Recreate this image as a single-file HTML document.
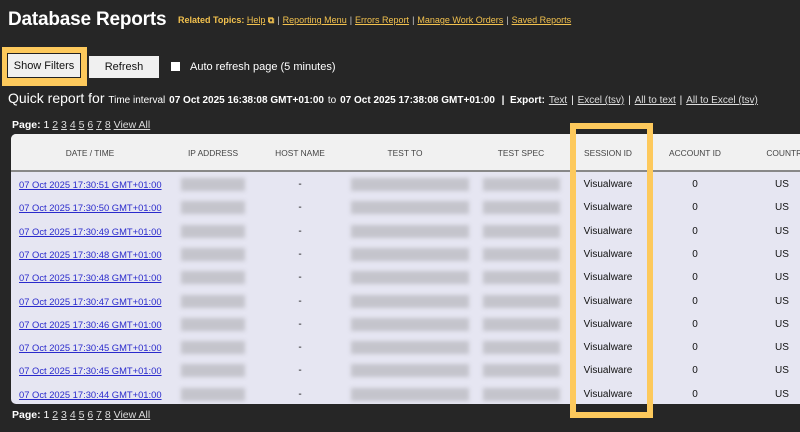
<!DOCTYPE html>
<html><head><meta charset="utf-8"><style>
*{margin:0;padding:0;box-sizing:border-box}
body{width:800px;height:432px;background:#262626;font-family:"Liberation Sans",Arial,sans-serif;position:relative;overflow:hidden;color:#fff}
.a{position:absolute;white-space:nowrap}
h1{position:absolute;left:8px;top:9px;font-size:19px;font-weight:bold;color:#fff;letter-spacing:-0.2px}
.rt{left:178px;top:15px;font-size:9px;font-weight:bold;color:#f2c14e}
.rt u{font-weight:normal;color:#f2c14e}
.rt span{color:#ccc;font-weight:normal;margin:0 3px}
.btn{position:absolute;background:#f0f0f0;color:#111;font-size:11.5px;text-align:center;line-height:21px;height:22px}
.q{left:8px;top:90px;font-size:14px;color:#fff}
.q small{font-size:10px}
.q b{font-size:10px}
.q u{font-size:10px;color:#ddd}
.pg{left:12px;top:119px;font-size:10.5px;color:#fff}
.pg u{color:#ddd}
.tbl{position:absolute;left:11px;top:134px;width:800px;height:270px;background:#e6e6f2;border-radius:5px 0 0 5px;overflow:hidden}
.hd{position:absolute;left:0;top:0;width:100%;height:38px;background:#f1f1f1;border-bottom:2px solid #888}
.th{position:absolute;top:14px;font-size:8.4px;color:#444;transform:translateX(-50%);white-space:nowrap}
.td{position:absolute;font-size:10px;color:#111;transform:translateX(-50%);white-space:nowrap}
.dl{position:absolute;left:8px;font-size:9.4px;color:#2a2acc;text-decoration:underline;white-space:nowrap}
.bl{position:absolute;height:13px;background:#c4c4cc;filter:blur(2px)}
</style></head><body>
<h1>Database Reports</h1>
<div class="a rt">Related Topics: <u>Help</u> ⧉<span>|</span><u>Reporting Menu</u><span>|</span><u>Errors Report</u><span>|</span><u>Manage Work Orders</u><span>|</span><u>Saved Reports</u></div>
<div style="position:absolute;left:2px;top:47px;width:85px;height:39px;background:#fdc95c"></div>
<div class="btn" style="left:7px;top:53px;width:74px;height:25px;border:1px solid #222;line-height:25px;font-size:11px">Show Filters</div>
<div class="btn" style="left:89px;top:56px;width:70px;line-height:23px;font-size:11px">Refresh</div>
<div style="position:absolute;left:171px;top:62px;width:9px;height:9px;background:#fff"></div>
<div class="a" style="left:190px;top:61px;font-size:11px;color:#fff">Auto refresh page (5 minutes)</div>
<div class="a q">Quick report for <small>Time interval</small> <b>07 Oct 2025 16:38:08 GMT+01:00</b> <small>to</small> <b>07 Oct 2025 17:38:08 GMT+01:00</b> <b>&nbsp;|&nbsp; Export:</b> <u>Text</u> <small>|</small> <u>Excel (tsv)</u> <small>|</small> <u>All to text</u> <small>|</small> <u>All to Excel (tsv)</u></div>
<div class="a pg"><b>Page:</b> 1 <u>2</u> <u>3</u> <u>4</u> <u>5</u> <u>6</u> <u>7</u> <u>8</u> <u>View All</u></div>
<div class="a pg" style="top:409px"><b>Page:</b> 1 <u>2</u> <u>3</u> <u>4</u> <u>5</u> <u>6</u> <u>7</u> <u>8</u> <u>View All</u></div>
<div class="tbl">
<div class="hd">
<div class="th" style="left:79px">DATE / TIME</div>
<div class="th" style="left:202px">IP ADDRESS</div>
<div class="th" style="left:289px">HOST NAME</div>
<div class="th" style="left:394px">TEST TO</div>
<div class="th" style="left:510px">TEST SPEC</div>
<div class="th" style="left:597px">SESSION ID</div>
<div class="th" style="left:684px">ACCOUNT ID</div>
<div class="th" style="left:776px">COUNTRY</div>
</div>
<div id="rows"></div>
</div>
<div style="position:absolute;left:570px;top:123px;width:83px;height:295px;border:6px solid #fdc95c"></div>
<div style="position:absolute;left:576px;top:129px;width:71px;height:5px;background:#262626"></div>
<div style="position:absolute;left:576px;top:404px;width:71px;height:8px;background:#262626"></div>
<script>
var t=["51","50","49","48","48","47","46","45","45","44"],h="";
t.forEach(function(s,i){var y=45+i*23.3;
h+='<div class="dl" style="top:'+(y)+'px">07 Oct 2025 17:30:'+s+' GMT+01:00</div>'+
'<div class="bl" style="left:170px;width:64px;top:'+(y-1)+'px"></div>'+
'<div class="td" style="left:289px;top:'+y+'px">-</div>'+
'<div class="bl" style="left:340px;width:118px;top:'+(y-1)+'px"></div>'+
'<div class="bl" style="left:472px;width:77px;top:'+(y-1)+'px"></div>'+
'<div class="td" style="left:597px;top:'+y+'px">Visualware</div>'+
'<div class="td" style="left:684px;top:'+y+'px">0</div>'+
'<div class="td" style="left:771px;top:'+y+'px">US</div>';});
document.getElementById('rows').innerHTML=h;
</script>
</body></html>
